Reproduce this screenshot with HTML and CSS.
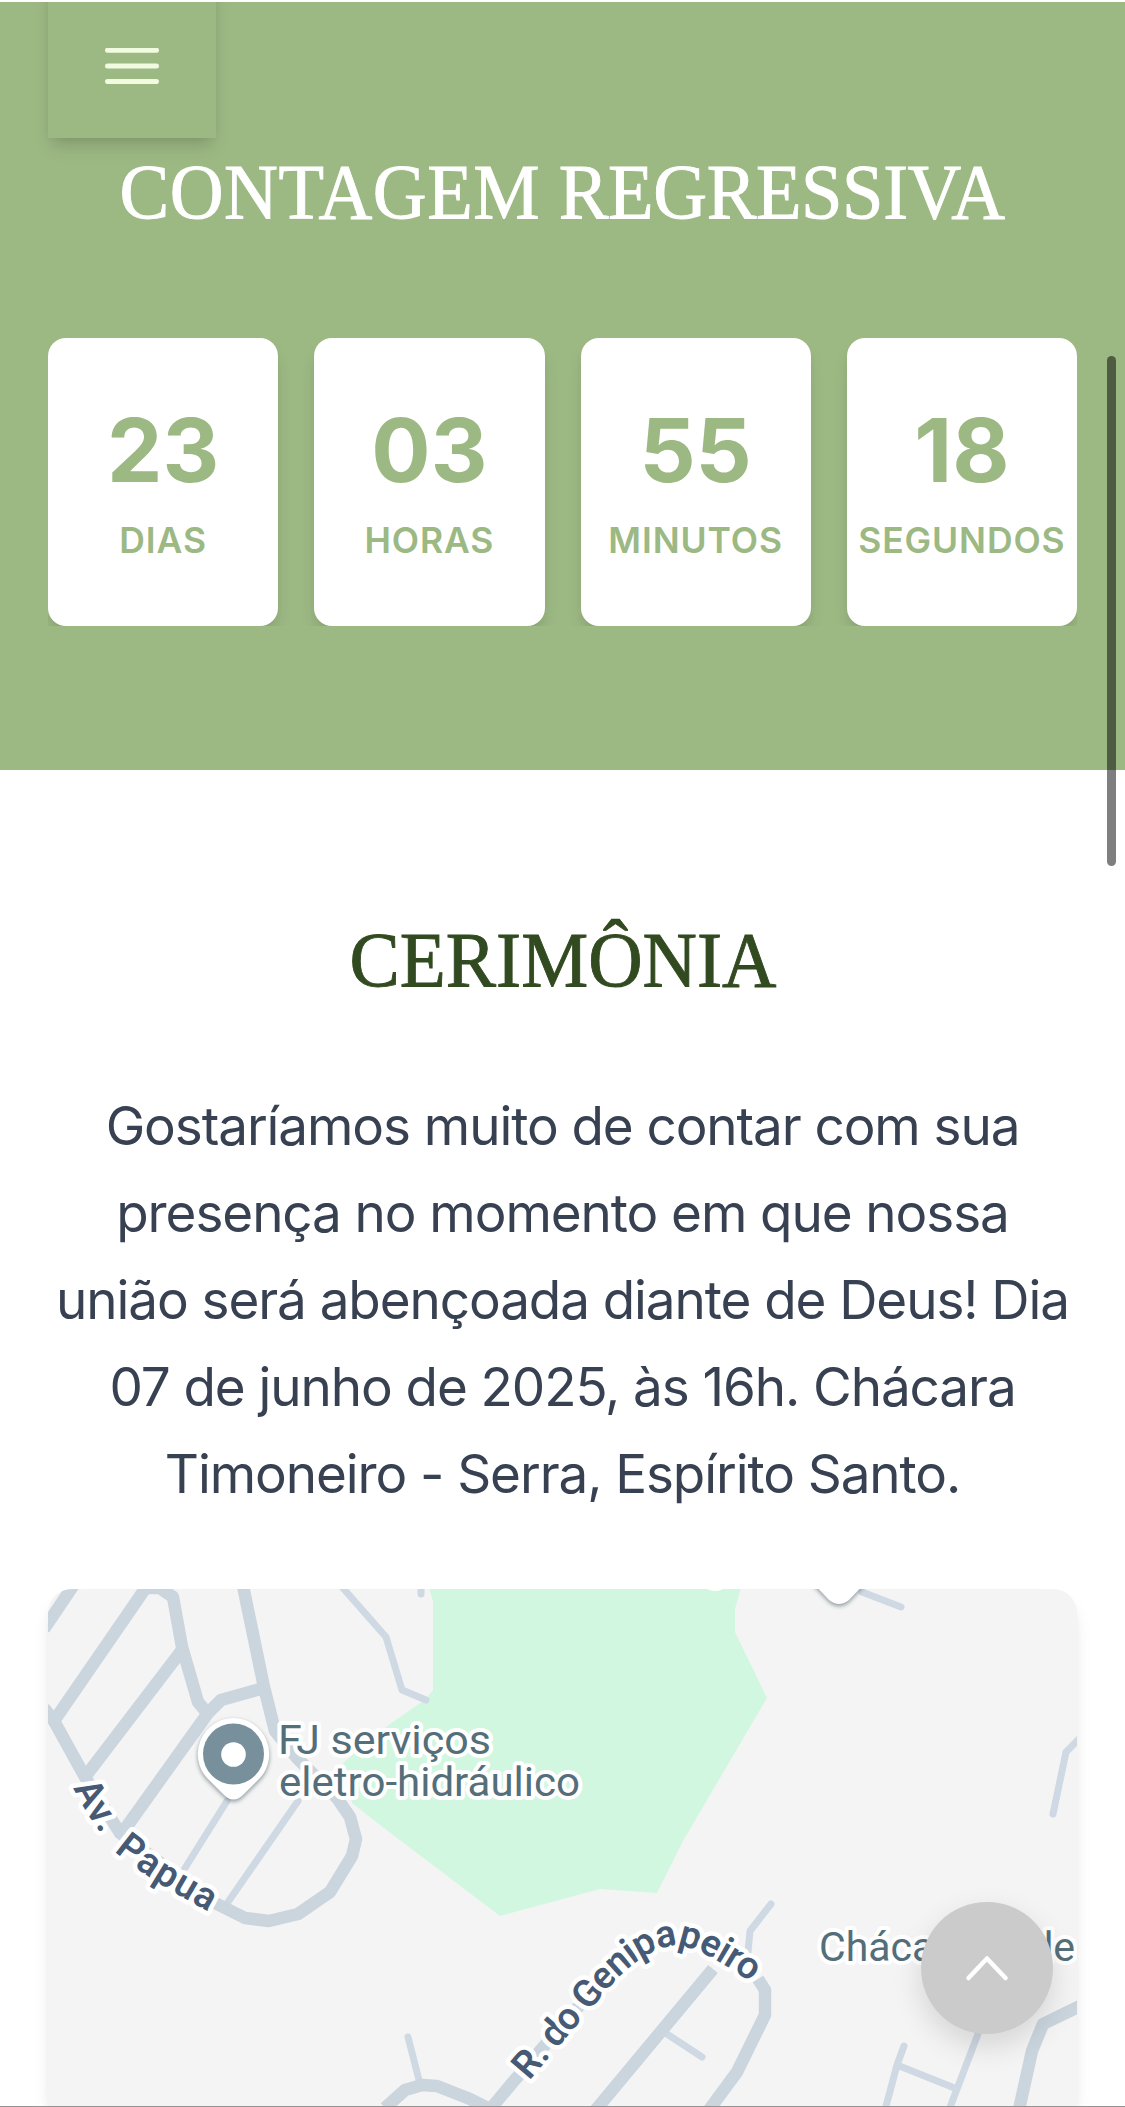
FILE: index.html
```html
<!DOCTYPE html>
<html lang="pt-BR">
<head>
<meta charset="utf-8">
<title>Contagem Regressiva</title>
<link rel="stylesheet" href="styles.css">
</head>
<body>
<button class="menu" aria-label="Menu">
  <svg width="54" height="36" viewBox="0 0 54 36"><path d="M2.5 2.3h49M2.5 18h49M2.5 33.6h49"/></svg>
</button>
<section class="countdown">
  <h2 class="title"><span><span class="loose">CONTAGEM</span> <span class="tight">REGRESSIVA</span></span></h2>
  <div class="cards">
    <div class="card"><span class="num">23</span><span class="unit">DIAS</span></div>
    <div class="card"><span class="num">03</span><span class="unit">HORAS</span></div>
    <div class="card"><span class="num">55</span><span class="unit">MINUTOS</span></div>
    <div class="card"><span class="num">18</span><span class="unit">SEGUNDOS</span></div>
  </div>
</section>
<section class="ceremony">
  <h2 class="title dark"><span>CERIMÔNIA</span></h2>
  <p class="text">Gostaríamos muito de contar com sua<br>presença no momento em que nossa<br>união será abençoada diante de Deus! Dia<br>07 de junho de 2025, às 16h. Chácara<br>Timoneiro - Serra, Espírito Santo.</p>
  <div class="map">
    <svg width="1029" height="517" viewBox="48 1589 1029 517">
      <defs>
        <path id="av" d="M73 1788L88 1815L110 1846"/>
        <path id="papua" d="M114 1851Q150 1882 230 1923"/>
        <path id="genipapeiro" d="M529 2081L601 1997Q640 1950 672 1946Q700 1942 780 2004"/>
      </defs>
      <path class="park" d="M429 1588L433 1601V1690L426 1699L390 1724L343 1763L352 1803L380 1825L500 1916L600 1889L657 1893L683 1841L767 1698L735 1632V1609L741 1588Z"/>
      <g class="lane">
        <path d="M227 1801L185 1868M298 1801L228 1902M342 1587L386 1637L402 1690L426 1700M421 1585V1594"/>
        <path d="M667 2034L702 2057M771 1904L750 1931L748 1952M408 2037L419 2080"/>
        <path d="M862 1592L901 1607M1080 1738L1066 1752L1053 1814M904 2046L897 2065L885 2110M897 2065L957 2089M978 2034L957 2089L949 2110"/>
      </g>
      <g class="road">
        <path d="M75 1583L44 1629M147 1586L54 1721M44 1708L54 1721L85 1777L120 1833L213 1902L245 1918L269 1921L298 1914L330 1892L352 1856L356 1839L350 1817L337 1798L297 1758L275 1731L264 1687L243 1586"/>
        <path d="M148 1588L160 1588L173 1597L182 1647L198 1702L208 1714M182 1650L85 1777M125 1829L208 1713L221 1700L264 1688"/>
        <path d="M385 2108L405 2090L422 2085L437 2086L470 2099L490 2109M488 2112L513 2082L600 1982M758 1979L765 1990V2015L737 2072L706 2114M713 1969L594 2112"/>
        <path d="M1080 2006L1043 2024L1032 2051L1018 2114"/>
      </g>
      <ellipse class="white" cx="715" cy="1588" rx="8" ry="3"/>
      <path class="pin" d="M810 1580L829 1600Q839 1608 849 1600L868 1580Z"/>
      <path class="pin" d="M233.500 1718A36 36 0 0 0 207 1778L223 1794Q233.500 1805 244 1794L260 1778A36 36 0 0 0 233.500 1718Z"/>
      <circle class="disc" cx="233.500" cy="1754" r="30.500"/>
      <circle class="white" cx="233.500" cy="1754.500" r="12.300"/>
      <g class="poi">
        <text x="278" y="1754" textLength="213" lengthAdjust="spacingAndGlyphs">FJ serviços</text>
        <text x="279" y="1796" textLength="301" lengthAdjust="spacingAndGlyphs">eletro-hidráulico</text>
        <text x="819" y="1961">Chácara</text>
        <text x="1075" y="1961" text-anchor="end">de</text>
      </g>
      <g class="street">
        <text class="wide"><textPath href="#av">Av.</textPath><textPath href="#papua">Papua</textPath></text>
        <text class="narrow"><textPath href="#genipapeiro">R. do Genipapeiro</textPath></text>
      </g>
    </svg>
  </div>
</section>
<button class="top" aria-label="Voltar ao topo">
  <svg width="44" height="28" viewBox="0 0 44 28"><path d="M3.500 24L22 4.500L40.500 24"/></svg>
</button>
<div class="scrollbar"></div>
</body>
</html>
```
FILE: styles.css
```css
* { box-sizing: border-box; }
body {
  margin: 0;
  height: 2107px;
  overflow: hidden;
  position: relative;
  background: #fff;
  border-top: 2px solid #fff;
  border-bottom: 1px solid #939393;
  font-family: Inter, "Liberation Sans", sans-serif;
}
button { border: 0; padding: 0; display: flex; justify-content: center; }
svg { display: block; }
.menu {
  position: absolute;
  left: 48px;
  top: -40px;
  width: 168px;
  height: 176px;
  padding-top: 86px;
  background: #9cb883;
  clip-path: inset(40px -50px -60px -50px);
  box-shadow: 0 12px 18px -3px rgba(0,0,0,.1), 0 6px 12px -6px rgba(0,0,0,.15);
}
.menu path { stroke: #f1fbdf; stroke-width: 5; stroke-linecap: round; }
.countdown { height: 768px; padding: 142px 48px 0; background: #9cb883; }
.title {
  margin: 0;
  height: 96px;
  font: 400 78px/96px "Liberation Serif", serif;
  color: #fff;
  text-align: center;
  white-space: nowrap;
}
.title > span { display: inline-block; transform: scaleX(.956); -webkit-text-stroke: .9px currentColor; }
.loose { letter-spacing: .55px; }
.tight { letter-spacing: -.45px; }
.dark { color: #314a20; }
.dark > span { transform: scaleX(.966); }
.cards {
  display: grid;
  grid-template-columns: repeat(4, 1fr);
  gap: 36px;
  margin-top: 98px;
  clip-path: inset(0);
}
.card {
  height: 288px;
  padding-top: 58px;
  display: flex;
  flex-direction: column;
  align-items: center;
  border-radius: 18px;
  background: #fff;
  color: #9cb883;
  box-shadow: 0 12px 18px -3px rgba(0,0,0,.1), 0 6px 12px -6px rgba(0,0,0,.1);
}
.num { font-size: 88px; line-height: 108px; font-weight: 700; }
.unit { font-size: 35.5px; line-height: 54px; font-weight: 600; letter-spacing: .9px; margin-top: 10px; white-space: nowrap; }
.ceremony { padding: 142px 48px 0; }
.text {
  margin: 75px -20px 0;
  font-size: 53px;
  line-height: 87px;
  letter-spacing: -1.08px;
  color: #374151;
  text-align: center;
  white-space: nowrap;
}
.map {
  height: 517px;
  margin-top: 71px;
  border-radius: 24px 24px 0 0;
  overflow: hidden;
  background: #f4f4f4;
  box-shadow: 0 12px 18px -3px rgba(0,0,0,.1), 0 6px 12px -6px rgba(0,0,0,.1);
}
.park { fill: #d1f7e1; }
.lane { fill: none; stroke: #cfd9e3; stroke-width: 7; stroke-linecap: round; stroke-linejoin: round; }
.road { fill: none; stroke: #cad5de; stroke-width: 12.5; stroke-linejoin: round; }
.white { fill: #fff; }
.pin { fill: #fff; filter: drop-shadow(0 2px 2px rgba(70,90,100,.6)); }
.disc { fill: #78909c; }
.poi, .street { font-family: Roboto, sans-serif; paint-order: stroke; stroke: #fff; stroke-linejoin: round; }
.poi { font-size: 41px; fill: #546e7a; stroke-width: 8px; }
.street { font-size: 38px; font-weight: 600; fill: #465a75; stroke-width: 9px; }
.wide { letter-spacing: 1.3px; }
.narrow { letter-spacing: -.9px; }
.top {
  position: absolute;
  left: 921px;
  top: 1900px;
  width: 132px;
  height: 132px;
  padding-top: 52px;
  border-radius: 50%;
  background: #cbcbcb;
  box-shadow: 0 12px 30px rgba(0,0,0,.13);
}
.top path { fill: none; stroke: #fff; stroke-width: 4.500; stroke-linecap: round; stroke-linejoin: round; }
.scrollbar {
  position: absolute;
  left: 1107px;
  top: 354px;
  width: 9px;
  height: 510px;
  border-radius: 5px;
  background: rgba(0,0,0,.5);
}
```
